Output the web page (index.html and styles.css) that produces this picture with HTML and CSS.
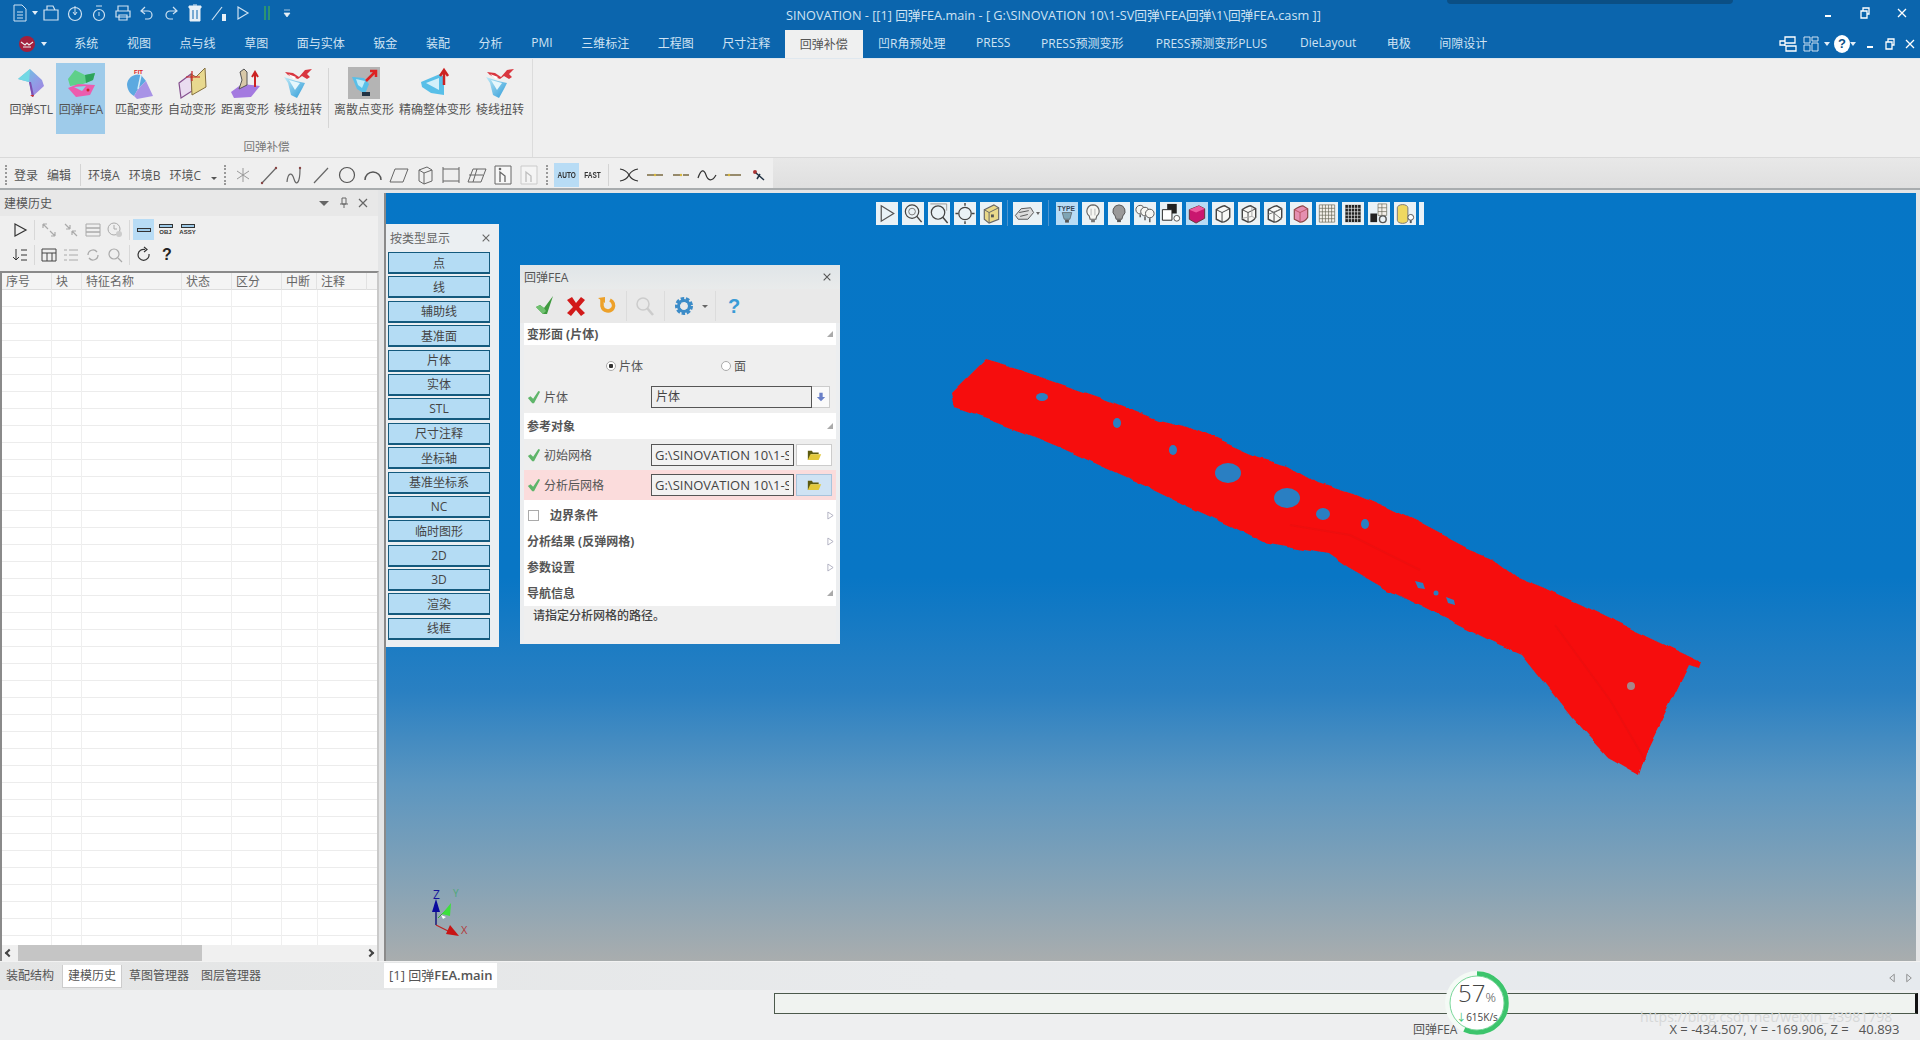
FILE: index.html
```html
<!DOCTYPE html>
<html lang="zh">
<head>
<meta charset="utf-8">
<title>SINOVATION</title>
<link rel="stylesheet" href="styles.css">
</head>
<body>
<svg class="sprite" width="0" height="0">
  <defs>
    <linearGradient id="stlg" x1="0" y1="0" x2="1" y2="1"><stop offset="0" stop-color="#5fd0df"/><stop offset=".55" stop-color="#8f9fe6"/><stop offset="1" stop-color="#a57be0"/></linearGradient>
    <linearGradient id="twg" x1="0" y1="0" x2="1" y2="1"><stop offset="0" stop-color="#bfeaf7"/><stop offset="1" stop-color="#2e9bd8"/></linearGradient>
    <filter id="wavy" x="-2%" y="-2%" width="104%" height="104%"><feTurbulence type="fractalNoise" baseFrequency=".035" numOctaves="2" seed="4"/><feDisplacementMap in="SourceGraphic" scale="7" xChannelSelector="R" yChannelSelector="G"/></filter>
  </defs>
  <symbol id="check" viewBox="0 0 16 16"><path d="M1 9l3-2 3 3 6-9 2 1-7 13H6z" fill="#5fb56a"/></symbol>
  <symbol id="folder" viewBox="0 0 18 14"><path d="M1 2h5l1 2h7v2H5L2 13H1z" fill="#5c5a10"/><path d="M4 6h13l-3 7H1z" fill="#e3c93a"/></symbol>
  <symbol id="tri" viewBox="0 0 8 10"><path d="M1 1l6 4-6 4z" fill="#fff" stroke="#aab" stroke-width="1"/></symbol>
  <symbol id="corner" viewBox="0 0 8 8"><path d="M8 0v8H0z" fill="#aaa"/></symbol>
  <symbol id="bulb" viewBox="0 0 22 24"><path d="M11 3a6.500 6.500 0 0 1 4 11.500l-1 3.500H8l-1-3.500a6.500 6.500 0 0 1 4-11.500z" fill="#f6f6f2" stroke="#666" stroke-width="1.200"/><path d="M9 7v7M13 7v7" stroke="#999" stroke-width=".7"/><path d="M9 18.500h4v2.500H9z" fill="#777"/></symbol>
  <symbol id="box" viewBox="0 0 22 24"><path d="M4 8c3-2 6-4 9-4l5 3v9c-2 3-5 5-8 5l-6-3z" fill="#f8f8f6" stroke="#444" stroke-width="1.500" stroke-linejoin="round"/><path d="M4 8l6 3 8-4M10 11v10" fill="none" stroke="#444"/></symbol>
  <symbol id="twist" viewBox="0 0 30 32"><path d="M1 10l12 4 9 2-3 6-5 9-6-3-3-12z" fill="url(#twg)"/><path d="M6 13l11 3-5 7z" fill="#e6f7fc"/><path d="M2 5l8 1 6 4 6-7 7-1-5 5 3 3-3 2-5-3-4 3-10-4z" fill="#d9363f"/><path d="M5 7l8 3-2 2z" fill="#fff"/></symbol>
</svg>

<header class="titlebar">
  <div class="qat">
    <svg class="q q-doc" viewBox="0 0 16 18"><path d="M2 1h8l4 4v12H2zM5 8h6M5 11h6M5 14h6" fill="none" stroke="#cfe2f2"/></svg><i class="caret"></i>
    <svg class="q" viewBox="0 0 18 18"><path d="M2 6h14v10H2zM5 6V2h6l2 4" fill="none" stroke="#cfe2f2" stroke-width="1.200"/></svg>
    <svg class="q" viewBox="0 0 18 18"><circle cx="9" cy="10" r="6.500" fill="none" stroke="#cfe2f2" stroke-width="1.200"/><path d="M9 2v8M7 8l2 3 2-3" fill="none" stroke="#cfe2f2"/></svg>
    <svg class="q" viewBox="0 0 18 18"><circle cx="9" cy="11" r="5.500" fill="none" stroke="#cfe2f2" stroke-width="1.200"/><path d="M9 8v4M7 1v2M9 1v2M11 1v2" stroke="#cfe2f2"/></svg>
    <svg class="q" viewBox="0 0 18 18"><path d="M4 7V2h10v5M2 7h14v6H2zM5 11h8v5H5z" fill="none" stroke="#cfe2f2" stroke-width="1.200"/></svg>
    <svg class="q" viewBox="0 0 18 18"><path d="M7 3L3 7l4 3M3 7h7a4 4 0 0 1 0 8H7" fill="none" stroke="#cfe2f2" stroke-width="1.200"/></svg>
    <svg class="q" viewBox="0 0 18 18"><path d="M11 3l4 4-4 3M15 7H8a4 4 0 0 0 0 8h3" fill="none" stroke="#cfe2f2" stroke-width="1.200"/></svg>
    <svg class="q" viewBox="0 0 18 18"><path d="M4 4h10v13H4zM3 2h12v2H3zM7 1h4" fill="#e7f0f7" stroke="#e7f0f7"/><path d="M7 6v9M11 6v9" stroke="#0a64ad"/></svg>
    <svg class="q" viewBox="0 0 18 18"><path d="M2 16L12 3" stroke="#cfe2f2" stroke-width="1.200"/><path d="M12 10h4v7h-4z" fill="#e7f0f7"/></svg>
    <svg class="q" viewBox="0 0 18 18"><path d="M4 3l10 6-10 6z" fill="none" stroke="#cfe2f2" stroke-width="1.200"/></svg>
    <svg class="q" viewBox="0 0 18 18"><path d="M7 2v14M11 2v14" stroke="#39a35f" stroke-width="1.500"/></svg>
    <svg class="q q-more" viewBox="0 0 10 18"><path d="M2 6h6M2 9h6l-3 4z" fill="#e7f0f7" stroke="#e7f0f7" stroke-width=".7"/></svg>
  </div>
  <div class="title">SINOVATION - [[1] 回弹FEA.main - [ G:\SINOVATION 10\1-SV回弹\FEA回弹\1\回弹FEA.casm ]]</div>
  <div class="wincontrols">
    <svg viewBox="0 0 12 12"><path d="M3 9h6" stroke="#fff" stroke-width="2"/></svg>
    <svg viewBox="0 0 12 12"><path d="M2 4h6v7H2zM4 4V1h6v6H8" fill="none" stroke="#fff" stroke-width="1.300"/></svg>
    <svg viewBox="0 0 12 12"><path d="M2 2l8 8M10 2l-8 8" stroke="#fff" stroke-width="1.300"/></svg>
  </div>
  <div class="titleshadow"></div>
</header>

<nav class="tabbar">
  <div class="applogo">
    <svg viewBox="0 0 18 18"><circle cx="9" cy="9" r="8" fill="#a3203d"/><path d="M3 7l4 3 2-2 2 2 4-3M5 12h8" fill="none" stroke="#eee" stroke-width="1.200"/></svg><i class="caret"></i>
  </div>
  <span class="tab">系统</span><span class="tab">视图</span><span class="tab">点与线</span><span class="tab">草图</span><span class="tab">面与实体</span><span class="tab">钣金</span><span class="tab">装配</span><span class="tab">分析</span><span class="tab">PMI</span><span class="tab">三维标注</span><span class="tab">工程图</span><span class="tab">尺寸注释</span><span class="tab active">回弹补偿</span><span class="tab x1">凹R角预处理</span><span class="tab x1">PRESS</span><span class="tab x1">PRESS预测变形</span><span class="tab x3">PRESS预测变形PLUS</span><span class="tab x2">DieLayout</span><span class="tab">电极</span><span class="tab">间隙设计</span>
  <div class="tabtools">
    <svg class="tt" viewBox="0 0 20 18"><path d="M7 2h10v6H7zM2 6h5v4H2zM8 11h10v5H8zM7 8v3" fill="none" stroke="#fff" stroke-width="1.300"/></svg>
    <svg class="tt" viewBox="0 0 20 18"><path d="M3 2h6v6H3zM11 2h6v4h-6zM3 10h6v6H3zM11 8h6v8h-6z" fill="none" stroke="#cfe2f2"/></svg><i class="caret"></i>
    <span class="helpdot">?</span><i class="caret"></i>
    <svg class="tc" viewBox="0 0 12 12"><path d="M3 9h6" stroke="#fff" stroke-width="2"/></svg>
    <svg class="tc" viewBox="0 0 12 12"><path d="M2 4h6v7H2zM4 4V1h6v6H8" fill="none" stroke="#fff" stroke-width="1.300"/></svg>
    <svg class="tc" viewBox="0 0 12 12"><path d="M2 2l8 8M10 2l-8 8" stroke="#fff" stroke-width="1.300"/></svg>
  </div>
</nav>

<section class="ribbon">
  <div class="rgroup">
    <div class="rrow">
      <div class="rbtn"><svg viewBox="0 0 30 32"><path d="M2 12L14 2l12 11 2 6-12 11-3-15z" fill="url(#stlg)"/><path d="M2 12l11 3L14 2z" fill="#72d8e4"/><path d="M13 15l3 15 2-1-3-14z" fill="#7d4fb0"/><path d="M14 28l3 2 1-2z" fill="#c33"/></svg><span>回弹STL</span></div>
      <div class="rbtn on"><svg viewBox="0 0 30 32"><path d="M2 12l7-9 10 5 10-2-2 7-10 4-13 2z" fill="#5fd08a"/><path d="M19 8l10-2-2 7-7 3z" fill="#2da35c"/><path d="M2 21l10-4 17 1-5 10-14 2z" fill="#ec5cae"/><path d="M8 20l12-1-4 5z" fill="#8fd3e8"/><circle cx="22" cy="23" r="1.500" fill="#c22"/></svg><span>回弹FEA</span></div>
      <div class="rbtn gapl"><svg viewBox="0 0 30 32"><text x="10" y="7" class="fit">FIT</text><path d="M3 17c1-7 8-11 14-9l5 6-8 8-4 7c-4-2-7-7-7-12z" fill="#5ca9e0"/><path d="M14 22l8-8 7 15-16 3-3-3z" fill="#a893e6"/><path d="M17 8l-3 14" stroke="#d7eef9" stroke-width="1.500"/></svg><span>匹配变形</span></div>
      <div class="rbtn"><svg viewBox="0 0 30 32"><path d="M2 16l12-9 1 17-11 7z" fill="#eadcf0" stroke="#85508f" stroke-width="1.200"/><path d="M14 7l5 3 9-9 1 19-14 8z" fill="#e8d98f" stroke="#85703f"/><path d="M9 10h14M15 4v10" stroke="#c22" stroke-width="1.200"/></svg><span>自动变形</span></div>
      <div class="rbtn"><svg viewBox="0 0 30 32"><path d="M1 25l11-8 18 2-9 11-17 1z" fill="#a47ae0"/><path d="M10 5l4-3 3 3v13l-8 4 3-9z" fill="#d9c9a8" stroke="#555"/><path d="M25 20V7M22 10l3-5 3 5" stroke="#c22" stroke-width="2" fill="none"/></svg><span>距离变形</span></div>
      <div class="rbtn"><svg viewBox="0 0 30 32"><use href="#twist"/></svg><span>棱线扭转</span></div>
      <div class="rsep"></div>
      <div class="rbtn"><svg class="grey" viewBox="0 0 32 32"><path d="M4 10l12 1 5 6-4 10-8-5z" fill="#58bfe8"/><path d="M8 12l9 2-3 7-4-3z" fill="#c0ebf8"/><path d="M14 25h8v4h-8z" fill="#234"/><path d="M18 14l9-9M22 4h6v6" stroke="#d22" stroke-width="2.500" fill="none"/></svg><span>离散点变形</span></div>
      <div class="rbtn"><svg viewBox="0 0 30 32"><path d="M1 15l19-8 4 3v18l-13-2-9-6z" fill="#58bfe8"/><path d="M6 16l13-5v12z" fill="#d2f0fa"/><path d="M24 18V5M20 9l4-6 4 6" stroke="#c22" stroke-width="2.500" fill="none"/></svg><span>精确整体变形</span></div>
      <div class="rbtn"><svg viewBox="0 0 30 32"><use href="#twist"/></svg><span>棱线扭转</span></div>
    </div>
    <div class="rlabel">回弹补偿</div>
  </div>
</section>

<section class="toolbar">
  <div class="toolleft">
    <i class="dots"></i>
    <span class="tl">登录</span><span class="tl">编辑</span>
    <i class="vs"></i>
    <span class="tl">环境A</span><span class="tl">环境B</span><span class="tl">环境C</span>
    <i class="darrow"></i>
    <i class="dots"></i>
    <svg class="ti" viewBox="0 0 22 22"><path d="M11 4v14M5 7l12 8M17 7L5 15" stroke="#999"/></svg>
    <svg class="ti" viewBox="0 0 22 22"><path d="M4 19L18 4" stroke="#666" stroke-width="1.200"/><circle cx="4" cy="19" r="1.200" fill="#844"/><circle cx="18" cy="4" r="1.200" fill="#844"/></svg>
    <svg class="ti" viewBox="0 0 22 22"><path d="M3 18c1-10 5-10 7-3s6 5 6-10" fill="none" stroke="#666" stroke-width="1.200"/><circle cx="16" cy="4" r="1.200" fill="#844"/></svg>
    <svg class="ti" viewBox="0 0 22 22"><path d="M4 19L18 4" stroke="#666" stroke-width="1.200"/></svg>
    <svg class="ti" viewBox="0 0 22 22"><circle cx="11" cy="11" r="7.500" fill="none" stroke="#555" stroke-width="1.200"/></svg>
    <svg class="ti" viewBox="0 0 22 22"><path d="M3 16a8 8 0 0 1 16 0" fill="none" stroke="#555" stroke-width="1.500"/></svg>
    <svg class="ti" viewBox="0 0 22 22"><path d="M7 5h13l-5 13H2z" fill="none" stroke="#666"/></svg>
    <svg class="ti" viewBox="0 0 22 22"><path d="M5 6l8-3 5 3v11l-8 3-5-3zM5 6l5 3 8-3M10 9v11" fill="none" stroke="#666"/></svg>
    <svg class="ti" viewBox="0 0 22 22"><path d="M3 3v16M19 3v16M3 5h16M3 17h16" fill="none" stroke="#666"/></svg>
    <svg class="ti" viewBox="0 0 22 22"><path d="M7 5h13l-5 13H2zM11 5L7 18M3 11h14" fill="none" stroke="#666"/></svg>
    <svg class="ti" viewBox="0 0 22 22"><path d="M3 2h16v18H3z" fill="#f7f7f7" stroke="#666"/><path d="M8 18V8l5 4v6" fill="none" stroke="#666" stroke-width="1.300"/><circle cx="8" cy="5" r="1.300" fill="#666"/></svg>
    <svg class="ti faint" viewBox="0 0 22 22"><path d="M3 2h16v18H3z" fill="#f7f7f7" stroke="#bbb"/><path d="M8 18V8l5 4v6" fill="none" stroke="#aaa" stroke-width="1.300"/></svg>
    <i class="dots"></i>
    <span class="mode on"><b>AUTO</b></span><span class="mode"><b>FAST</b></span>
    <i class="vs"></i>
    <svg class="ti" viewBox="0 0 22 22"><path d="M2 5c6 1 8 4 9 6s3 5 9 6M2 17c6-1 8-4 9-6s3-5 9-6" fill="none" stroke="#333" stroke-width="1.200"/></svg>
    <svg class="ti" viewBox="0 0 22 22"><path d="M3 11h16" stroke="#7a6a40" stroke-width="1.500"/><circle cx="11" cy="11" r="1.200" fill="#d8b840"/></svg>
    <svg class="ti" viewBox="0 0 22 22"><path d="M3 11h7M13 11h6" stroke="#7a6a40" stroke-width="1.500"/><circle cx="11" cy="11" r="1.200" fill="#d8b840"/></svg>
    <svg class="ti" viewBox="0 0 22 22"><path d="M2 14c3-9 6-9 8-3s6 7 10 0" fill="none" stroke="#333" stroke-width="1.200"/></svg>
    <svg class="ti" viewBox="0 0 22 22"><path d="M3 11h16" stroke="#7a6a40" stroke-width="1.500"/><circle cx="7" cy="11" r="1.200" fill="#d8b840"/></svg>
    <svg class="ti" viewBox="0 0 22 22"><circle cx="7" cy="8" r="2" fill="#a33"/><path d="M8 9l8 7M12 10l-3 5" stroke="#234" stroke-width="1.500"/></svg>
  </div>
</section>

<main class="workspace">
  <aside class="dock">
    <div class="dockhead">
      <span>建模历史</span>
      <div class="dockctl">
        <i class="dtri"></i>
        <svg viewBox="0 0 12 12"><path d="M4 1h4v6H4zM2 7h8M6 7v4" fill="none" stroke="#666"/></svg>
        <svg viewBox="0 0 12 12"><path d="M2 2l8 8M10 2l-8 8" stroke="#666" stroke-width="1.200"/></svg>
      </div>
    </div>
    <div class="docktools">
      <div class="dtrow">
        <svg class="di" viewBox="0 0 18 18"><path d="M4 3l11 6-11 6z" fill="none" stroke="#333" stroke-width="1.200"/></svg>
        <i class="dvs"></i>
        <svg class="di" viewBox="0 0 18 18"><path d="M3 3l5 5M3 3h4M3 3v4M15 15l-5-5M15 15h-4M15 15v-4" fill="none" stroke="#aaa" stroke-width="1.200"/></svg>
        <svg class="di" viewBox="0 0 18 18"><path d="M8 8L3 3M8 8H4M8 8V4M10 10l5 5M10 10h4M10 10v4" fill="none" stroke="#aaa" stroke-width="1.200"/></svg>
        <svg class="di" viewBox="0 0 18 18"><path d="M2 3h14v4H2zM2 7h14v4H2zM2 11h14v4H2z" fill="none" stroke="#aaa"/></svg>
        <svg class="di" viewBox="0 0 18 18"><circle cx="8" cy="8" r="6" fill="none" stroke="#aaa"/><path d="M8 4v4h3" fill="none" stroke="#aaa"/><circle cx="13" cy="13" r="3" fill="#ccc"/></svg>
        <i class="dvs"></i>
        <span class="bar-btn on"><i></i></span>
        <span class="bar-btn"><i></i><b>OBJ</b></span>
        <span class="bar-btn"><i></i><b>ASSY</b></span>
      </div>
      <div class="dtrow">
        <svg class="di" viewBox="0 0 18 18"><path d="M5 3v11M2 11l3 3 3-3" fill="none" stroke="#333"/><path d="M10 4h6M10 9h6M10 14h6" stroke="#333"/></svg>
        <i class="dvs"></i>
        <svg class="di" viewBox="0 0 18 18"><path d="M2 3h14v12H2zM2 7h14M7 7v8M12 7v8" fill="none" stroke="#444"/></svg>
        <svg class="di" viewBox="0 0 18 18"><path d="M7 4h9M7 9h9M7 14h9M2 4h3M2 9h3M2 14h3" stroke="#aaa"/></svg>
        <svg class="di" viewBox="0 0 18 18"><path d="M4 9a5 5 0 0 1 9-3M14 9a5 5 0 0 1-9 3" fill="none" stroke="#aaa" stroke-width="1.300"/></svg>
        <svg class="di" viewBox="0 0 18 18"><circle cx="8" cy="8" r="5" fill="none" stroke="#aaa" stroke-width="1.200"/><path d="M12 12l4 4" stroke="#aaa" stroke-width="1.300"/></svg>
        <i class="dvs"></i>
        <svg class="di" viewBox="0 0 18 18"><path d="M14 8a5.500 5.500 0 1 1-4-4.500M9 1l3 2.500L9 6" fill="none" stroke="#333" stroke-width="1.200"/></svg>
        <span class="qmark">?</span>
      </div>
    </div>
    <div class="tablewrap">
      <div class="thead">
        <span>序号</span><span>块</span><span>特征名称</span><span>状态</span><span>区分</span><span>中断</span><span>注释</span>
      </div>
      <div class="tgrid"></div>
      <div class="hscroll"><i class="arrow-l"></i><div class="track"><div class="thumb"></div></div><i class="arrow-r"></i></div>
    </div>
  </aside>

  <section class="viewport">
    <div class="vbar">
      <span class="vi"><svg viewBox="0 0 22 24"><path d="M5 4l13 8-13 8z" fill="none" stroke="#555" stroke-width="1.300"/></svg></span>
      <span class="vi"><svg viewBox="0 0 22 24"><circle cx="10" cy="10" r="7" fill="none" stroke="#444" stroke-width="1.300"/><circle cx="10" cy="10" r="3.500" fill="none" stroke="#777"/><path d="M15 15l5 6" stroke="#444" stroke-width="1.500"/></svg></span>
      <span class="vi"><svg viewBox="0 0 22 24"><path d="M2 2h17v7" fill="none" stroke="#999"/><circle cx="10" cy="11" r="7" fill="none" stroke="#444" stroke-width="1.300"/><path d="M15 16l5 6" stroke="#444" stroke-width="1.500"/></svg></span>
      <span class="vi"><svg viewBox="0 0 22 24"><circle cx="11" cy="12" r="6.500" fill="none" stroke="#444" stroke-width="1.300"/><path d="M11 1v3M11 20v3M1 12h3M18 12h3" stroke="#444" stroke-width="1.500"/></svg></span>
      <span class="vi"><svg viewBox="0 0 22 24"><path d="M4 8l10-5 5 3v12l-10 4-5-4z" fill="#e9d98a" stroke="#666" stroke-width="1.200"/><path d="M4 8l5 3 10-5M9 11v11" fill="none" stroke="#666"/><path d="M11 13h3v3h-3z" fill="#555"/></svg></span>
      <i class="vvs"></i>
      <span class="vi wide"><svg viewBox="0 0 22 24"><path d="M2 14l6-7 10-1 3 5-6 7H5z" fill="#ddd" stroke="#555"/><path d="M6 11l10-2M7 15l8-2" stroke="#555"/></svg><i class="vcaret"></i></span>
      <i class="vvs second"></i>
      <span class="vi on"><svg viewBox="0 0 22 24"><path d="M6 11h10l-2 7H8z" fill="#7fa5b5" stroke="#555" stroke-width=".7"/><path d="M9 18.500h4v3H9z" fill="#555"/><text x="1" y="9" class="type">TYPE</text></svg></span>
      <span class="vi"><svg viewBox="0 0 22 24"><use href="#bulb"/></svg></span>
      <span class="vi"><svg viewBox="0 0 22 24"><path d="M11 3a6.500 6.500 0 0 1 4 11.500l-1 3.500H8l-1-3.500a6.500 6.500 0 0 1 4-11.500z" fill="#999" stroke="#555"/><path d="M9 18.500h4v2.500H9z" fill="#555"/></svg></span>
      <span class="vi"><svg viewBox="0 0 22 24"><circle cx="6" cy="8" r="4.500" fill="#f6f6f2" stroke="#555"/><circle cx="11" cy="10" r="4.500" fill="#f6f6f2" stroke="#555"/><circle cx="16" cy="12" r="4.500" fill="#f6f6f2" stroke="#555"/><path d="M6 13v3M11 15v4M16 17v4" stroke="#555" stroke-width="1.500"/></svg></span>
      <span class="vi"><svg viewBox="0 0 22 24"><path d="M7 2h10v10H7z" fill="#222"/><path d="M2 8h10v11H2z" fill="#fff" stroke="#222"/><circle cx="17" cy="17" r="3" fill="#fff" stroke="#555"/></svg></span>
      <span class="vi on"><svg viewBox="0 0 22 24"><path d="M3 8l10-4 6 3v10l-9 5-7-4z" fill="#c9176f" stroke="#633"/><path d="M3 8l7 3 9-4-6-3z" fill="#ee5aa0"/></svg></span>
      <span class="vi"><svg viewBox="0 0 22 24"><use href="#box"/></svg></span>
      <span class="vi"><svg viewBox="0 0 22 24"><use href="#box"/><path d="M14 5v10l-10 2M14 15l4 2" fill="none" stroke="#aaa"/></svg></span>
      <span class="vi"><svg viewBox="0 0 22 24"><use href="#box"/><path d="M4 13l14-6M8 10l10 8" fill="none" stroke="#777"/></svg></span>
      <span class="vi"><svg viewBox="0 0 22 24"><path d="M4 8c3-2 6-4 9-4l5 3v9c-2 3-5 5-8 5l-6-3z" fill="#e58fb0" stroke="#844" stroke-width="1.200"/><path d="M4 8l6 3 8-4M10 11v10" fill="none" stroke="#b56"/></svg></span>
      <span class="vi"><svg viewBox="0 0 22 24"><path class="mesh light" d="M3 3h16v18H3zM3 6.600h16M3 10.200h16M3 13.800h16M3 17.400h16M6.200 3v18M9.400 3v18M12.600 3v18M15.800 3v18"/></svg></span>
      <span class="vi"><svg viewBox="0 0 22 24"><path d="M3 3h16v18H3z" fill="#222"/><path class="mesh white" d="M3 6.600h16M3 10.200h16M3 13.800h16M3 17.400h16M6.200 3v18M9.400 3v18M12.600 3v18M15.800 3v18"/></svg></span>
      <span class="vi"><svg viewBox="0 0 22 24"><path class="mesh light" d="M10 2h9v12h-9zM10 6h9M10 10h9M14 2v12"/><path d="M2 12h7v9H2z" fill="#222"/><circle cx="15" cy="18" r="3.500" fill="none" stroke="#555" stroke-width="1.500"/></svg></span>
      <span class="vi"><svg viewBox="0 0 22 24"><path d="M3 6a5 3 0 0 1 11 0v13a5 3 0 0 1-11 0z" fill="#f0d860" stroke="#777"/><circle cx="17" cy="16" r="3" fill="#fff" stroke="#555"/><path d="M16 19h2v3h-2z" fill="#555"/></svg></span>
      <span class="vmore"></span>
    </div>

    <svg class="part" viewBox="940 340 780 450" preserveAspectRatio="none">
      <path fill="#f61111" filter="url(#wavy)" d="M985 360L1020 370 1064 385 1099 397 1159 420 1189 427 1258 457 1288 465 1318 482 1353 493 1388 508 1418 522 1467 548 1492 558 1517 577 1542 587 1577 603 1701 662 1699 668 1689 665 1667 710 1646 753 1639 775 1607 757 1572 718 1522 655 1487 640 1388 590 1348 567 1328 553 1263 542 1233 527 1189 507 1154 490 1099 465 1059 447 1025 433 990 420 955 408 952 393Z"/>
      <path fill="none" stroke="#ee0e0e" stroke-width="2" d="M1555 625L1610 700 1645 760M1290 525L1350 535 1420 570"/>
      <g fill="#2a7fc2">
        <ellipse cx="1042" cy="397" rx="6" ry="4"/><ellipse cx="1117" cy="423" rx="4" ry="5"/><ellipse cx="1173" cy="450" rx="4" ry="5"/><ellipse cx="1228" cy="473" rx="13" ry="10"/><ellipse cx="1287" cy="498" rx="13" ry="10"/><ellipse cx="1323" cy="514" rx="7" ry="6"/><ellipse cx="1365" cy="524" rx="4" ry="5"/>
        <path d="M1415 581l8 2 2 6-7-1zM1446 597l8 3 1 5-7-2z"/><circle cx="1436" cy="593" r="2.500"/>
      </g>
      <circle cx="1631" cy="686" r="4" fill="#a7858a"/>
    </svg>

    <svg class="triad" viewBox="0 0 60 60">
      <text x="17" y="14" class="az">Z</text><text x="37" y="12" class="ay">Y</text><text x="45" y="49" class="ax">X</text>
      <path d="M20 40V22" stroke="#1a1a7a" stroke-width="1.500"/><path d="M20 14l4 13h-8z" fill="#0a0a9e"/>
      <path d="M22 33l10-10" stroke="#3a3" stroke-width="1"/><path d="M35 18l-1 13-8-2z" fill="#3de03d"/><path d="M25 30l5 2-3 2z" fill="#fff"/>
      <path d="M20 40l16 8" stroke="#b22" stroke-width="1.200"/><path d="M43 51l-13-2 4-9z" fill="#c81414"/>
    </svg>

    <div class="typepanel">
      <div class="phead"><span>按类型显示</span><svg viewBox="0 0 12 12"><path d="M2 2l8 8M10 2l-8 8" stroke="#666" stroke-width="1.300"/></svg></div>
      <div class="typelist">
        <button class="tbtn">点</button><button class="tbtn">线</button><button class="tbtn">辅助线</button><button class="tbtn">基准面</button><button class="tbtn">片体</button><button class="tbtn">实体</button><button class="tbtn">STL</button><button class="tbtn">尺寸注释</button><button class="tbtn">坐标轴</button><button class="tbtn">基准坐标系</button><button class="tbtn">NC</button><button class="tbtn">临时图形</button><button class="tbtn">2D</button><button class="tbtn">3D</button><button class="tbtn">渲染</button><button class="tbtn">线框</button>
      </div>
    </div>

    <div class="dialog">
      <div class="dhead"><span>回弹FEA</span><svg viewBox="0 0 12 12"><path d="M2 2l8 8M10 2l-8 8" stroke="#555" stroke-width="1.300"/></svg></div>
      <div class="dtools">
        <svg class="dt" viewBox="0 0 22 22"><path d="M2 12l4-2 4 3 9-12-6 18H9z" fill="#3f9a3f"/><path d="M2 12l4-2 4 3 2 3-3 3z" fill="#6fc06f"/></svg>
        <svg class="dt" viewBox="0 0 22 22"><path d="M2 5l5-3 4 6 5-6 4 3-6 7 6 6-4 3-5-6-5 6-4-3 6-6z" fill="#d21a1a"/></svg>
        <svg class="dt" viewBox="0 0 22 22"><path d="M6 4v7a6 6 0 0 0 11 2 6 6 0 0 0-3-8" fill="none" stroke="#eda12a" stroke-width="3.500"/><path d="M2 3l7-1 0 6z" fill="#eda12a"/></svg>
        <i class="dsep s1"></i>
        <svg class="dt dim" viewBox="0 0 22 22"><circle cx="9" cy="9" r="6" fill="none" stroke="#ccc" stroke-width="1.500"/><path d="M13 13l6 7" stroke="#ccc" stroke-width="2.500"/></svg>
        <i class="dsep"></i>
        <svg class="dt gear" viewBox="0 0 22 22"><circle cx="11" cy="11" r="6.500" fill="none" stroke="#3c8cc8" stroke-width="5" stroke-dasharray="3 1.500"/><circle cx="11" cy="11" r="5.500" fill="none" stroke="#3c8cc8" stroke-width="3"/></svg>
        <i class="dcaret"></i>
        <i class="dsep"></i>
        <span class="hq">?</span>
      </div>
      <div class="sect"><span>变形面 (片体)</span><svg class="cn" viewBox="0 0 8 8"><use href="#corner"/></svg></div>
      <div class="body">
        <div class="radios">
          <label class="radio"><i class="dot sel"></i>片体</label>
          <label class="radio"><i class="dot"></i>面</label>
        </div>
        <div class="frow">
          <svg class="ck" viewBox="0 0 16 16"><use href="#check"/></svg><span class="flabel">片体</span>
          <div class="selbox">片体</div>
          <span class="arrbtn"><svg viewBox="0 0 12 12"><path d="M4 1h4v5h3l-5 5-5-5h3z" fill="#6a80c8"/></svg></span>
        </div>
      </div>
      <div class="sect ref"><span>参考对象</span><svg class="cn" viewBox="0 0 8 8"><use href="#corner"/></svg></div>
      <div class="frow2">
        <svg class="ck" viewBox="0 0 16 16"><use href="#check"/></svg><span class="flabel">初始网格</span>
        <div class="pathbox"><span>G:\SINOVATION 10\1-S</span></div>
        <span class="fbtn"><svg viewBox="0 0 18 14"><use href="#folder"/></svg></span>
      </div>
      <div class="frow2 pink">
        <svg class="ck" viewBox="0 0 16 16"><use href="#check"/></svg><span class="flabel">分析后网格</span>
        <div class="pathbox"><span>G:\SINOVATION 10\1-S</span></div>
        <span class="fbtn act"><svg viewBox="0 0 18 14"><use href="#folder"/></svg></span>
      </div>
      <div class="sect col first"><span class="cbline"><i class="cb"></i>边界条件</span><svg class="tr" viewBox="0 0 8 10"><use href="#tri"/></svg></div>
      <div class="sect col"><span>分析结果 (反弹网格)</span><svg class="tr" viewBox="0 0 8 10"><use href="#tri"/></svg></div>
      <div class="sect col"><span>参数设置</span><svg class="tr" viewBox="0 0 8 10"><use href="#tri"/></svg></div>
      <div class="sect col"><span>导航信息</span><svg class="cn" viewBox="0 0 8 8"><use href="#corner"/></svg></div>
      <div class="navinfo">请指定分析网格的路径。</div>
    </div>
  </section>
</main>

<div class="tabstrip">
  <div class="dtabs"><span>装配结构</span><span class="cur">建模历史</span><span>草图管理器</span><span>图层管理器</span></div>
  <div class="vtabs"><span class="doc">[1] 回弹<b>FEA.main</b></span>
    <div class="pager"><svg viewBox="0 0 8 12"><path d="M7 1L1 6l6 5z" fill="none" stroke="#777"/></svg><svg viewBox="0 0 8 12"><path d="M1 1l6 5-6 5z" fill="none" stroke="#777"/></svg></div>
  </div>
</div>

<footer class="status">
  <div class="progress"></div>
  <div class="statusline"><span class="st-name">回弹FEA</span><span class="st-xyz">X = -434.507, Y = -169.906, Z =&nbsp;&nbsp; 40.893</span></div>
  <div class="watermark">https://blog.csdn.net/weixin_43981798</div>
  <div class="gauge">
    <svg viewBox="0 0 66 66"><circle cx="33" cy="33" r="32" fill="#f4faf5"/><circle cx="33" cy="33" r="27" fill="#fff" stroke="#7ad79a"/><circle cx="33" cy="33" r="29.500" fill="none" stroke="#3cc46c" stroke-width="4.500" stroke-dasharray="105.700 185.400" transform="rotate(-90 33 33)"/></svg>
    <div class="gnum">57<small>%</small></div>
    <div class="gspeed"><i>↓</i>615K/s</div>
  </div>
</footer>
</body>
</html>
```

FILE: styles.css
```css
* { box-sizing: border-box; }
html, body { margin: 0; height: 100%; }
body {
  width: 1920px; height: 1040px; overflow: hidden; position: relative;
  display: flex; flex-direction: column;
  font: 12px "Open Sans", "Noto Sans CJK SC", sans-serif; color: #444;
  background: #eeeff0;
}
.sprite { position: absolute; }
svg { display: block; flex: none; }
i { display: block; flex: none; font-style: normal; }

/* title */
.titlebar { height: 29px; display: flex; align-items: center; background: #0b65ad; position: relative; padding-bottom: 3px; }
.qat { flex: 0 0 786px; display: flex; align-items: center; padding-left: 11px; gap: 6px; margin-top: -1px; }
.q { width: 18px; height: 18px; }
.q-more { width: 10px; }
.q-doc { margin-right: -3px; }
.caret { width: 0; height: 0; border: 3px solid transparent; border-top: 4px solid #e3eef7; border-bottom: 0; }
.qat .caret { margin-right: -2px; }
.title { flex: 1; color: #cfe3f3; font-size: 12.700px; white-space: nowrap; padding-top: 2px; }
.wincontrols { display: flex; gap: 25px; padding-right: 12px; }
.wincontrols svg { width: 12px; height: 12px; }
.titleshadow { position: absolute; left: 1447px; top: 0; width: 286px; height: 4px; background: #0b4f85; border-radius: 0 0 8px 8px; }

/* tabs */
.tabbar { height: 29px; display: flex; align-items: stretch; background: #0b65ad; padding-left: 18px; }
.applogo { flex: 0 0 42px; display: flex; align-items: center; gap: 5px; }
.applogo svg { width: 18px; height: 18px; }
.tab { padding: 0 14.300px 2px; display: flex; align-items: center; color: #cfe3f3; font-size: 12px; white-space: nowrap; }
.tab.x1 { padding: 0 15.300px 2px; }
.tab.x2 { padding: 0 16px 2px; }
.tab.x3 { padding: 0 17px 2px; }
.tab.active { background: #eff0f0; color: #555; padding: 0 15px 1px; margin: 1px 0 0; }
.tabtools { margin-left: auto; display: flex; align-items: center; padding-right: 4px; }
.tt { width: 20px; height: 18px; margin-right: 3px; }
.helpdot { width: 16px; height: 18px; margin: 0 0 0 4px; border-radius: 50%; background: #fff; color: #0b4f85; font: bold 13px/18px "Liberation Sans", sans-serif; text-align: center; }
.tc { width: 12px; height: 12px; margin-left: 8px; }

/* ribbon */
.ribbon { height: 100px; background: #efefef; border-bottom: 1px solid #d9d9d9; border-top: 1px solid #dfe8ef; display: flex; padding-left: 7px; }
.rgroup { width: 526px; display: flex; flex-direction: column; border-right: 1px solid #dcdcdc; padding-top: 4px; }
.rrow { display: flex; height: 71px; }
.rbtn { display: flex; flex-direction: column; align-items: center; padding: 4px 2.500px 0; color: #555; white-space: nowrap; }
.rbtn svg { width: 30px; height: 32px; }
.rbtn span { margin-top: 2px; line-height: 17px; }
.rbtn.on { background: #9ecbea; width: 49px; margin-left: 1px; }
.rbtn.gapl { margin-left: 7px; }
.rbtn svg.grey { background: #b4b4b4; width: 32px; }
.fit { font: bold 6px "Liberation Sans", sans-serif; fill: #d22; }
.rsep { width: 1px; height: 60px; margin: 5px 3px 0; background: #d5d5d5; flex: none; }
.rlabel { text-align: center; color: #777; font-size: 11.500px; margin-top: 4px; margin-left: -6px; }

/* toolbar */
.toolbar { height: 32px; background: linear-gradient(#e8e8e8, #dfdfdf); border-bottom: 2px solid #a8acae; }
.toolleft { width: 773px; height: 30px; display: flex; align-items: center; background: #efefef; padding: 3px 0 0 5px; }
.dots { width: 0; height: 20px; border-left: 2px dotted #999; margin: 0 4px; }
.toolleft > .dots:first-child { margin: 0 7px 0 0; }
.tl { margin-right: 9px; white-space: nowrap; color: #555; }
.vs { width: 1px; height: 22px; background: #d4d4d4; margin: 0 7px 0 0; }
.darrow { width: 0; height: 0; border: 3px solid transparent; border-top: 3px solid #555; margin: 10px 3px 0 1px; }
.ti { width: 22px; height: 22px; margin: 0 2px; }
.faint { opacity: .7; }
.mode { width: 25px; height: 24px; font: bold 9px/24px "Liberation Sans", sans-serif; text-align: center; color: #333; margin-right: 2px; }
.mode b { display: inline-block; transform: scaleX(.72); }
.mode.on { background: #b8dcf5; margin-left: 2px; }
.mode:not(.on) { width: 20px; margin-right: 7px; }

/* workspace */
.workspace { height: 771px; display: flex; background: #e4e5e6; }
.dock { width: 384px; flex: none; display: flex; flex-direction: column; padding-right: 6px; }
.dockhead { height: 26px; display: flex; align-items: center; justify-content: space-between; padding: 0 9px 0 4px; font-size: 12px; color: #555; background: #e8e8e8; }
.dockctl { display: flex; align-items: center; gap: 7px; }
.dockctl svg { width: 12px; height: 12px; }
.dtri { width: 0; height: 0; border: 5px solid transparent; border-top: 5px solid #666; border-bottom: 0; margin-right: 2px; }
.docktools { height: 55px; padding-top: 1px; background: #efefef; }
.dtrow { display: flex; align-items: center; height: 25px; padding-left: 9px; }
.di { width: 18px; height: 18px; margin: 0 2px; }
.dvs { width: 1px; height: 20px; background: #d8d8d8; margin: 0 3px; }
.bar-btn { width: 21px; height: 21px; margin-right: 1px; display: flex; flex-direction: column; align-items: center; justify-content: center; }
.bar-btn.on { background: #b8dcf5; }
.bar-btn i { width: 14px; height: 4px; border: 1px solid #333; background: #9ecae8; }
.bar-btn b { font: bold 6px/8px "Liberation Sans", sans-serif; color: #333; }
.qmark { font: bold 16px/18px "Liberation Sans", sans-serif; color: #222; margin-left: 7px; }
.tablewrap { flex: 1; display: flex; flex-direction: column; background: #fff; border-left: 2px solid #8a8a8a; border-right: 2px solid #c9c9c9; border-top: 2px solid #8a8a8a; margin-right: -1px; }
.thead { height: 17px; display: grid; grid-template-columns: 50px 30px 100px 50px 50px 35px 50px; background: #f4f4f4; border-bottom: 1px solid #ddd; color: #666; line-height: 17px; flex: none; }
.thead span { padding-left: 4px; border-right: 1px solid #e2e2e2; }
.tgrid { flex: 1; background: repeating-linear-gradient(#fff 0 16px, #ececec 16px 17px); position: relative; }
.tgrid::after {
  content: ""; position: absolute; inset: 0 8px 0 0;
  background:
    linear-gradient(#efefef,#efefef) 49px 0/1px 100% no-repeat,
    linear-gradient(#efefef,#efefef) 79px 0/1px 100% no-repeat,
    linear-gradient(#efefef,#efefef) 179px 0/1px 100% no-repeat,
    linear-gradient(#efefef,#efefef) 229px 0/1px 100% no-repeat,
    linear-gradient(#efefef,#efefef) 279px 0/1px 100% no-repeat,
    linear-gradient(#efefef,#efefef) 315px 0/1px 100% no-repeat;
}
.hscroll { height: 16px; flex: none; display: flex; align-items: center; background: #f0f0f0; padding: 0 4px; }
.track { flex: 1; height: 16px; margin: 0 6px; }
.thumb { width: 184px; height: 100%; background: #c5c5c5; }
.arrow-l, .arrow-r { width: 6px; height: 6px; border-left: 2px solid #444; border-bottom: 2px solid #444; transform: rotate(45deg); }
.arrow-r { transform: rotate(-135deg); }

/* viewport */
.viewport {
  flex: 1; position: relative; margin: 3px 4px 0 0; overflow: hidden;
  border-left: 2px solid #8a8a8a;
  background: linear-gradient(#0676c6 0, #0876c5 50%, #2a80c2 65%, #5c96c0 77%, #86a3b6 90%, #a9adae 100%);
}
.vbar { position: absolute; left: 490px; top: 7px; display: flex; align-items: center; gap: 4px; }
.vi { width: 22px; height: 23px; background: #eaf2f6; display: block; flex: none; overflow: hidden; }
.vi.on { background: #b8dcf5; }
.vi.wide { width: 29px; display: flex; align-items: center; }
.vi svg { width: 22px; height: 23px; }
.vcaret { width: 0; height: 0; border: 2px solid transparent; border-top: 3px solid #666; border-bottom: 0; margin-left: 1px; }
.vvs { width: 1px; height: 26px; background: #4b94cf; margin: 0 1px; }
.vvs.second { margin: 0 3px 0 2px; }
.vmore { width: 5px; height: 23px; background: #eaf2f7; margin-left: -1px; }
.mesh { fill: #f4f0ea; stroke: #222; stroke-width: 1; }
.mesh.light { stroke: #665; stroke-width: .7; }
.mesh.white { fill: none; stroke: #eee; stroke-width: .7; }
.type { font: bold 7px "Liberation Sans", sans-serif; fill: #345; }
.part { position: absolute; left: 554px; top: 147px; width: 780px; height: 450px; }
.triad { position: absolute; left: 30px; top: 692px; width: 60px; height: 60px; }
.az { font: 12px "Open Sans", sans-serif; fill: #14149a; }
.ay { font: 10px "Open Sans", sans-serif; fill: #4da878; }
.ax { font: 11px "Open Sans", sans-serif; fill: #b23a3a; }

/* floating type panel */
.typepanel { position: absolute; left: -1px; top: 31px; width: 114px; height: 423px; background: #ebeff2; padding: 0 9px 0 3px; }
.phead { height: 28px; display: flex; align-items: center; justify-content: space-between; padding-left: 2px; color: #666; }
.phead svg { width: 10px; height: 10px; margin-right: -1px; }
.typelist { display: flex; flex-direction: column; gap: 2.400px; }
.tbtn { height: 22px; padding: 0; background: #b4dcf4; border: 1px solid #145a7d; border-bottom-width: 2px; border-radius: 0; font: 12px "Open Sans", "Noto Sans CJK SC", sans-serif; color: #444; }

/* dialog */
.dialog { position: absolute; left: 134px; top: 72px; width: 320px; height: 379px; background: #eceef0; padding: 0 4px; display: flex; flex-direction: column; }
.dhead { height: 24px; display: flex; align-items: center; justify-content: space-between; background: linear-gradient(#e0e5e8, #e9ebeb); margin: 0 -4px; padding: 0 8px 0 4px; color: #555; flex: none; }
.dhead svg { width: 10px; height: 10px; }
.dtools { height: 34px; display: flex; align-items: center; padding-left: 14px; background: #e9e9e9; margin: 0 -4px; flex: none; }
.dt { width: 22px; height: 22px; margin-right: 9px; }
.dsep { width: 1px; height: 30px; background: #dcdcdc; margin-right: 7px; }
.dsep.s1 { margin-left: -1px; }
.dim { margin-right: 8px; }
.gear { margin-right: 7px; margin-left: 1px; }
.dcaret { width: 0; height: 0; border: 3px solid transparent; border-top: 3px solid #666; margin: 3px 7px 0 0; }
.hq { font: bold 20px/22px "Liberation Sans", sans-serif; color: #3a9bd6; margin-left: 5px; }
.sect { height: 22px; display: flex; align-items: center; justify-content: space-between; padding: 0 4px 0 3px; background: #fff; color: #555; font-weight: 700; flex: none; }
.ref { height: 26px; }
.col { height: 26px; }
.col.first { height: 28px; padding-top: 2px; }
.cn { width: 6px; height: 6px; margin-right: -1px; }
.tr { width: 7px; height: 9px; margin-right: -2px; }
.cbline { display: flex; align-items: center; }
.cb { width: 11px; height: 11px; border: 1px solid #aaa; background: #fff; margin: 0 11px 0 1px; }
.body { height: 68px; background: #efefef; flex: none; }
.radios { height: 42px; padding: 13px 0 0 82px; display: flex; }
.radio { display: flex; align-items: center; height: 16px; width: 118px; color: #555; }
.dot { width: 10px; height: 10px; border: 1px solid #aaa; border-radius: 50%; background: #fff; margin-right: 3px; position: relative; }
.dot.sel { background: radial-gradient(#333 0 2px, #fff 2.500px); }
.frow { height: 22px; display: flex; align-items: center; padding-left: 3px; margin-top: -1px; }
.frow2 { height: 31px; display: flex; align-items: center; padding-left: 3px; background: #eeeeee; flex: none; }
.pink { background: #fbdcdc; height: 30px; }
.ck { width: 14px; height: 14px; margin-right: 3px; }
.flabel { width: 107px; color: #555; }
.selbox { width: 161px; height: 22px; border: 1px solid #555; background: #efefef; padding-left: 4px; line-height: 19px; color: #444; }
.arrbtn { width: 18px; height: 22px; border: 1px solid #ccc; border-left: 0; background: #fafafa; display: flex; align-items: center; justify-content: center; }
.arrbtn svg { width: 10px; height: 10px; }
.pathbox { width: 143px; height: 22px; border: 1px solid #555; background: #f2f2f2; padding: 0 0 0 3px; line-height: 20px; color: #444; font-size: 13px; }
.pathbox span { display: block; width: 134px; white-space: nowrap; overflow: hidden; }
.fbtn { width: 36px; height: 22px; margin-left: 2px; border: 1px solid #ccc; background: #fff; display: flex; align-items: center; justify-content: center; }
.fbtn svg { width: 15px; height: 12px; }
.fbtn.act { background: #cfe3f4; border-color: #a8c4dc; }
.navinfo { flex: 1; margin-bottom: 4px; background: #efefef; padding: 0 0 0 9px; line-height: 19px; color: #444; font-weight: 500; }

/* bottom tabs */
.tabstrip { height: 29px; display: flex; background: linear-gradient(90deg, #e4e5e5 0, #e8eaec 50%, #e6eaee 100%); border-top: 1px solid #f2f2f2; flex: none; }
.dtabs { width: 384px; display: flex; align-items: flex-start; padding-top: 3px; font-size: 12px; color: #555; flex: none; }
.dtabs span { padding: 0 6px; height: 23px; line-height: 22px; white-space: nowrap; }
.dtabs .cur { background: #fff; border: 1px solid #ccc; border-top: 0; padding: 0 5px; margin-left: 2px; margin-right: 1px; }
.vtabs { flex: 1; display: flex; justify-content: space-between; align-items: flex-start; padding-top: 1px; }
.doc { background: #fff; height: 25px; padding: 0 5px; line-height: 24px; color: #555; font-size: 13px; width: 113px; white-space: nowrap; }
.doc b { font-weight: 600; }
.pager { display: flex; gap: 11px; padding: 10px 8px 0 0; }
.pager svg { width: 6px; height: 10px; }

/* status */
.status { flex: 1; position: relative; display: flex; flex-direction: column; background: #eeeff0; }
.progress { height: 21px; margin: 3px 2px 0 774px; border: 1px solid #4c5a4c; border-right: 3px solid #111; background: #f0f3f0; flex: none; }
.statusline { display: flex; padding-left: 1413px; margin-top: 8px; line-height: 14px; color: #555; align-items: baseline; }
.st-xyz { margin-left: 212px; white-space: nowrap; font-size: 13px; }
.watermark { position: absolute; left: 1640px; top: 21px; font-size: 14px; line-height: 12px; color: #d6d8d8; white-space: nowrap; }
.gauge { position: absolute; left: 1444px; top: -20px; width: 66px; height: 66px; text-align: center; }
.gauge svg { position: absolute; inset: 0; width: 66px; height: 66px; }
.gnum { position: relative; padding-top: 9px; font: 300 24px/27px "Open Sans", sans-serif; color: #444; }
.gnum small { font-size: 13px; }
.gspeed { position: relative; font-size: 10px; line-height: 12px; color: #444; }
.gspeed i { display: inline; color: #3cc46c; }
```
